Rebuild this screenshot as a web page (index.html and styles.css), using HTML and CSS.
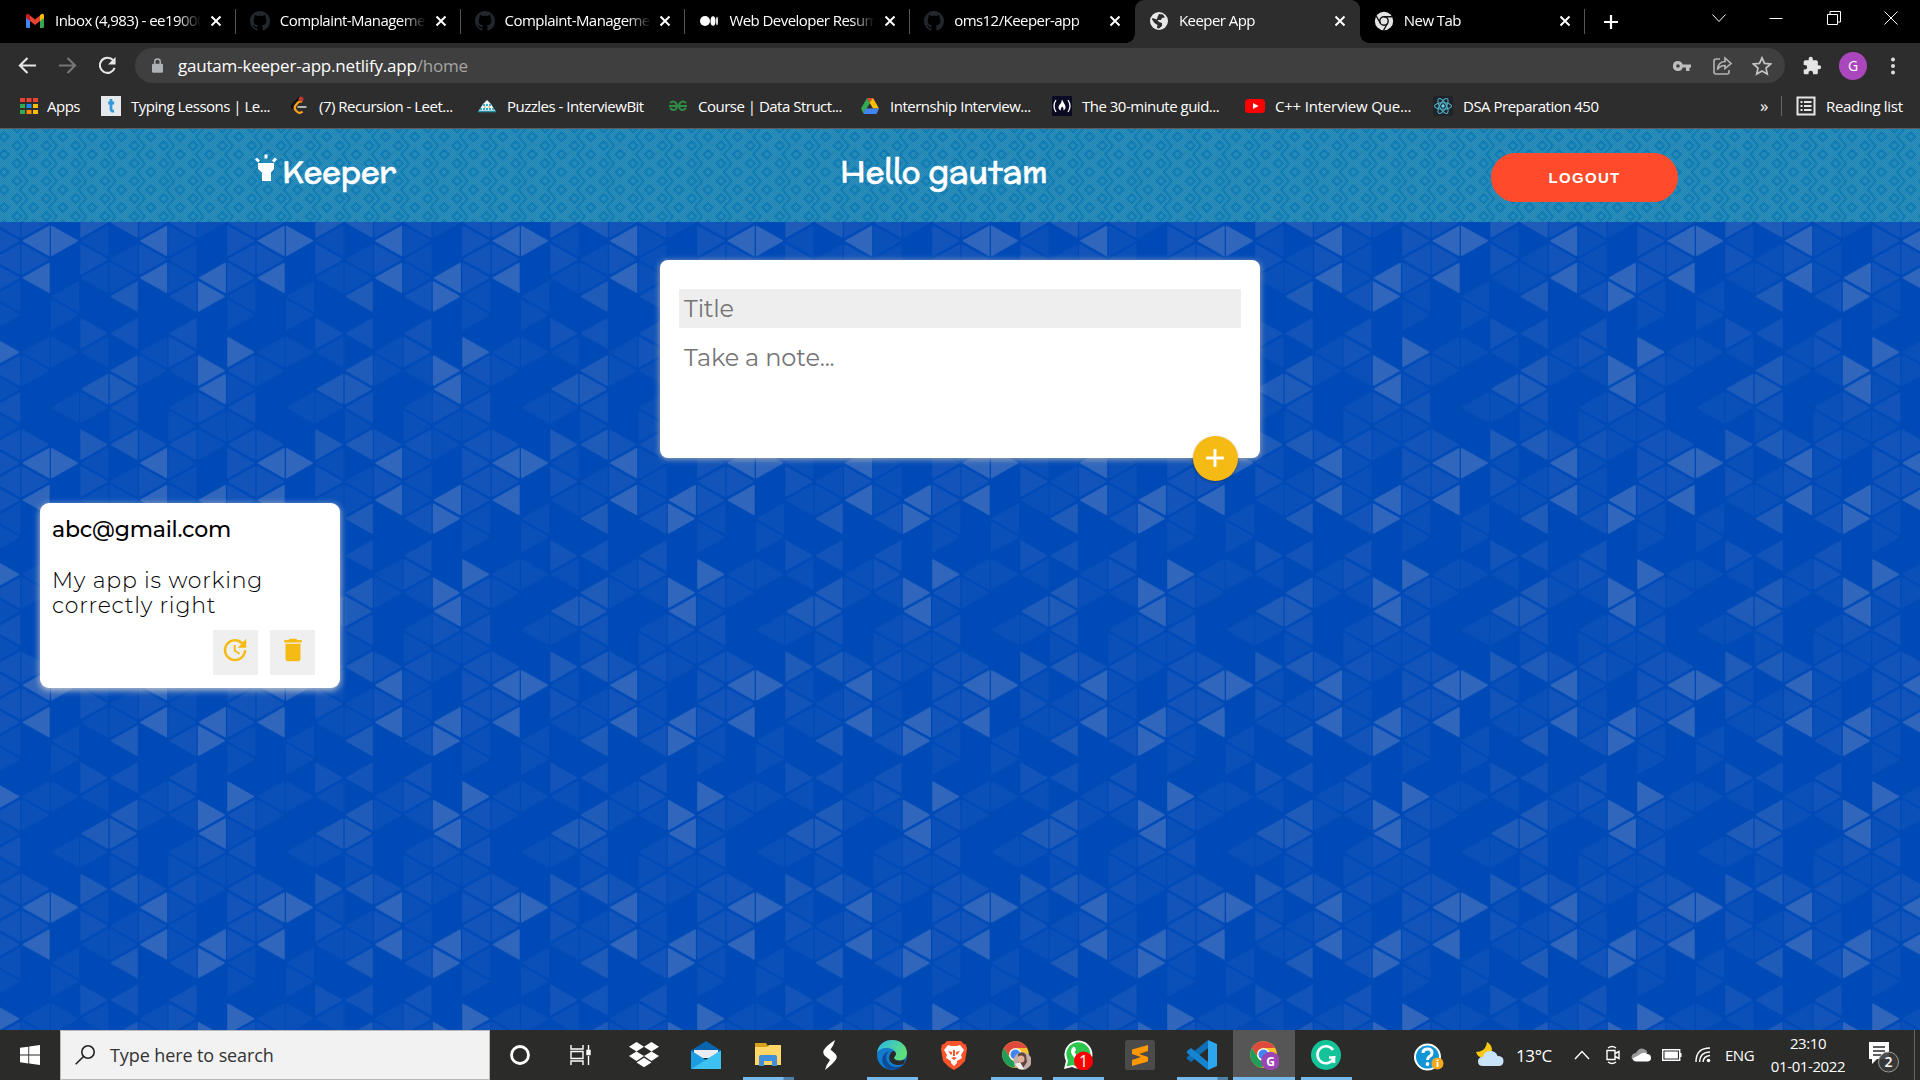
FILE: index.html
```html
<!DOCTYPE html>
<html lang="en">
<head>
<meta charset="utf-8">
<title>Keeper App</title>
<link rel="stylesheet" href="styles.css">
</head>
<body>
<svg class="defs" width="0" height="0" aria-hidden="true">
  <symbol id="x" viewBox="0 0 12 12"><path d="M1.5 1.5l9 9m0-9l-9 9" stroke="#fff" stroke-width="2" fill="none"/></symbol>
  <symbol id="github" viewBox="0 0 16 16"><path fill="#22272e" d="M8 0C3.58 0 0 3.58 0 8c0 3.54 2.29 6.53 5.47 7.59.4.07.55-.17.55-.38 0-.19-.01-.82-.01-1.49-2.01.37-2.53-.49-2.69-.94-.09-.23-.48-.94-.82-1.13-.28-.15-.68-.52-.01-.53.63-.01 1.08.58 1.23.82.72 1.21 1.87.87 2.33.66.07-.52.28-.87.51-1.07-1.78-.2-3.64-.89-3.64-3.95 0-.87.31-1.59.82-2.15-.08-.2-.36-1.02.08-2.12 0 0 .67-.21 2.2.82.64-.18 1.32-.27 2-.27s1.36.09 2 .27c1.53-1.04 2.2-.82 2.2-.82.44 1.1.16 1.92.08 2.12.51.56.82 1.27.82 2.15 0 3.07-1.87 3.75-3.65 3.95.29.25.54.73.54 1.48 0 1.07-.01 1.93-.01 2.2 0 .21.15.46.55.38A8.01 8.01 0 0016 8c0-4.42-3.58-8-8-8z"/></symbol>
  <symbol id="chrome" viewBox="0 0 48 48">
    <circle cx="24" cy="24" r="22" fill="#fbc02d"/>
    <path fill="#de4b3e" d="M4.9 13A22 22 0 0 1 43 13.200H24A11 11 0 0 0 14.500 29.500z"/>
    <path fill="#1e9e5a" d="M4.900 13L14.500 29.500A11 11 0 0 0 24 35L22 46A22 22 0 0 1 4.900 13z"/>
    <circle cx="24" cy="24" r="10.500" fill="#fff"/><circle cx="24" cy="24" r="8.300" fill="#4285f4"/>
  </symbol>
</svg>

<header class="tabs">
  <div class="tab">
    <svg class="fav" viewBox="0 0 20 20"><path fill="#4285f4" d="M1 5v10.500q0 1.500 1.500 1.500H5V8.500z"/><path fill="#34a853" d="M19 5v10.500q0 1.500-1.500 1.500H15V8.500z"/><path fill="#ea4335" d="M5 4.500l5 4 5-4V10l-5 4-5-4z"/><path fill="#c5221f" d="M1 5q0-3 2.500-2L5 4.300V10L1 7z"/><path fill="#fbbc04" d="M19 5q0-3-2.500-2L15 4.300V10l4-3z"/></svg>
    <span class="label">Inbox (4,983) - ee190001</span><svg class="close"><use href="#x"/></svg>
  </div>
  <div class="tab"><svg class="fav"><use href="#github"/></svg><span class="label">Complaint-Management</span><svg class="close"><use href="#x"/></svg></div>
  <div class="tab"><svg class="fav"><use href="#github"/></svg><span class="label">Complaint-Management</span><svg class="close"><use href="#x"/></svg></div>
  <div class="tab"><svg class="fav" viewBox="0 0 20 20" fill="#fff"><circle cx="6" cy="10" r="5"/><ellipse cx="14" cy="10" rx="2.500" ry="4.800"/><ellipse cx="18" cy="10" rx=".9" ry="4.300"/></svg><span class="label">Web Developer Resume</span><svg class="close"><use href="#x"/></svg></div>
  <div class="tab before-active"><svg class="fav"><use href="#github"/></svg><span class="label">oms12/Keeper-app</span><svg class="close"><use href="#x"/></svg></div>
  <div class="tab active"><svg class="fav" viewBox="0 0 20 20"><circle cx="10" cy="10" r="9" fill="#e8e8e8"/><path fill="#2d2d2d" d="M10 3l4 .5 2 3-3 .5-1 2H8.500L10 11l3 1v3l-3 2.500-2-.5.5-3-3-2L3 8.500 3.500 7 8 8.500 8.500 6z"/></svg><span class="label">Keeper App</span><svg class="close"><use href="#x"/></svg></div>
  <div class="tab"><svg class="fav" viewBox="0 0 20 20"><circle cx="10" cy="10" r="9.200" fill="#e4e4e4"/><circle cx="10" cy="10" r="4.200" fill="#e4e4e4" stroke="#111" stroke-width="1.400"/><path d="M10 5.700h8.300M6.300 12L2.200 5M13.700 12l-4 7" stroke="#111" stroke-width="1.400"/></svg><span class="label">New Tab</span><svg class="close"><use href="#x"/></svg></div>
  <svg class="plus" viewBox="0 0 16 16"><path d="M8 1v14M1 8h14" stroke="#fff" stroke-width="2.200"/></svg>
  <div class="window-buttons">
    <svg viewBox="0 0 14 14"><path d="M.5 3.500l6.500 7 6.500-7"/></svg>
    <svg viewBox="0 0 14 14"><path d="M.5 7.500h13"/></svg>
    <svg viewBox="0 0 14 14"><path d="M.5 3.500h10v10H.500zM3 3.500v-3h10.500V11h-3"/></svg>
    <svg viewBox="0 0 14 14"><path d="M.5.5l13 13m0-13l-13 13"/></svg>
  </div>
</header>

<nav class="toolbar">
  <svg class="nav-icon" viewBox="0 0 20 20" stroke="#e6e6e6"><path d="M19 10H2m8-8l-8 8 8 8"/></svg>
  <svg class="nav-icon" viewBox="0 0 20 20" stroke="#777"><path d="M1 10h17m-8-8l8 8-8 8"/></svg>
  <svg class="nav-icon" viewBox="0 0 20 20" stroke="#e6e6e6"><path d="M17.500 12.500A8 8 0 1 1 16 4.500"/><path d="M18.500 1v8h-8z" fill="#e6e6e6" stroke="none"/></svg>
  <div class="omnibox">
    <svg class="lock" viewBox="0 0 12 16"><rect y="6" width="12" height="10" rx="1.500" fill="#aeb1b6"/><path d="M3 7V4a3 3 0 0 1 6 0v3" fill="none" stroke="#aeb1b6" stroke-width="1.600"/></svg>
    <span class="url">gautam-keeper-app.netlify.app<i>/home</i></span>
    <svg class="oi" viewBox="0 0 20 20"><path fill="#bdbdbd" fill-rule="evenodd" d="M6 5a5 5 0 1 0 4.700 6.500H14V15h3.500v-3.500H19v-3h-8.300A5 5 0 0 0 6 5zm0 3.200a1.800 1.800 0 1 1 0 3.600 1.800 1.800 0 0 1 0-3.600z"/></svg>
    <svg class="oi" viewBox="0 0 20 20" fill="none" stroke="#b4b4b4" stroke-width="1.600"><path d="M8 3H4a2 2 0 0 0-2 2v11a2 2 0 0 0 2 2h11a2 2 0 0 0 2-2v-2"/><path d="M13 2l6 5.500-6 5V9.500q-5 0-7.500 4Q6 6 13 5.500z"/></svg>
    <svg class="oi" viewBox="0 0 20 20" fill="none" stroke="#c4c4c4" stroke-width="1.700"><path d="M10 1.800l2.500 5.600 6.100.6-4.600 4.100 1.300 6L10 15l-5.300 3.100 1.300-6L1.400 8l6.100-.6z"/></svg>
  </div>
  <svg class="puzzle" viewBox="0 0 24 24"><path fill="#e4e4e4" d="M20.500 11H19V7c0-1.100-.9-2-2-2h-4V3.500a2.500 2.500 0 0 0-5 0V5H4c-1.100 0-2 .9-2 2v3.800h1.500a2.700 2.700 0 0 1 0 5.400H2V20c0 1.100.9 2 2 2h3.800v-1.500a2.700 2.700 0 0 1 5.400 0V22H17c1.100 0 2-.9 2-2v-4h1.500a2.500 2.500 0 0 0 0-5z"/></svg>
  <span class="avatar">G</span>
  <svg class="dots" viewBox="0 0 4 18" fill="#ddd"><circle cx="2" cy="2.500" r="2"/><circle cx="2" cy="9" r="2"/><circle cx="2" cy="15.500" r="2"/></svg>
</nav>

<nav class="bookmarks">
  <a class="apps-link"><svg viewBox="0 0 20 20"><path fill="#ea4335" d="M1 2h5v4H1zm6.500 0h5v4h-5zM14 2h5v4h-5z"/><path fill="#34a853" d="M1 8h5v4H1zm0 6h5v4H1z"/><path fill="#1e88f0" d="M7.500 8h5v4h-5z"/><path fill="#fbbc04" d="M14 8h5v4h-5zm0 6h5v4h-5z"/><path fill="#fb8c04" d="M7.500 14h5v4h-5z"/></svg>Apps</a>
  <a><svg viewBox="0 0 20 20"><rect width="20" height="20" fill="#e6e9ec"/><path d="M10 3v10q0 2.500 3 2M7.200 7h6" stroke="#3498db" stroke-width="2.800" fill="none"/></svg>Typing Lessons | Le...</a>
  <a><svg viewBox="0 0 20 20"><path d="M11 1L4 8.500q-2 2 0 4" fill="none" stroke="#111" stroke-width="2.300"/><path d="M13 6q-2-1.500-4 .5l-2.500 3q-1.500 2.500 0 4.500l2 2q2.500 2 5-.5" fill="none" stroke="#ffa116" stroke-width="2.200"/><path d="M8.500 11h9" stroke="#b3b3b3" stroke-width="2"/><circle cx="12" cy="3" r="2.500" fill="#b93a32"/></svg>(7) Recursion - Leet...</a>
  <a><svg viewBox="0 0 20 20"><path fill="#e9f5f8" d="M10 4l4 4 5 8H1l5-8z"/><path d="M6 9h8M3 13h14" stroke="#38a9c7" stroke-width="2" stroke-dasharray="2 1"/><path d="M1 15.500h18" stroke="#2b8ca8" stroke-width="1.600"/><path d="M7 11h7" stroke="#f3a53b" stroke-dasharray="2 2"/></svg>Puzzles - InterviewBit</a>
  <a><svg viewBox="0 0 20 20" fill="none" stroke="#2f8d46" stroke-width="2"><path d="M1 10h18M2 7q3-3 6 0 2 3 0 6-3 2.500-6-1M18 7q-3-3-6 0-2 3 0 6 3 2.500 6-1"/></svg>Course | Data Struct...</a>
  <a><svg viewBox="0 0 20 20"><path fill="#ea4335" d="M7 2h6l-3 5z"/><path fill="#34a853" d="M7 2l3 5-6.500 10.500L1 12.500z"/><path fill="#fbbc04" d="M13 2l6 10.500h-6L9.500 6.500z"/><path fill="#4285f4" d="M5.500 12.500H19L16.500 18h-13z"/></svg>Internship Interview...</a>
  <a><svg viewBox="0 0 20 20"><rect width="20" height="20" fill="#0a0a23"/><path d="M4 4q-4 6 0 12M16 4q4 6 0 12" stroke="#fff" stroke-width="1.300" fill="none"/><path fill="#fff" d="M10 3.500q1 2 3 5.500 1.500 4-1.500 5.500.5-3-1.500-4-1.500 1.500-1.300 4Q5.500 13 7 9.500q2.500-2 3-6z"/></svg>The 30-minute guid...</a>
  <a class="wide"><svg viewBox="0 0 20 20"><rect y="3" width="20" height="14" rx="3.500" fill="#f00"/><path d="M8 7l5.500 3L8 13z" fill="#fff"/></svg>C++ Interview Que...</a>
  <a><svg viewBox="0 0 20 20"><rect width="20" height="20" rx="2" fill="#20232a"/><g fill="none" stroke="#4fb3cc" stroke-width="1.100"><ellipse cx="10" cy="10" rx="8.500" ry="3.300"/><ellipse cx="10" cy="10" rx="8.500" ry="3.300" transform="rotate(60 10 10)"/><ellipse cx="10" cy="10" rx="8.500" ry="3.300" transform="rotate(120 10 10)"/></g><circle cx="10" cy="10" r="1.700" fill="#61dafb"/></svg>DSA Preparation 450</a>
  <span class="more">»</span>
  <a class="reading"><svg viewBox="0 0 20 20" stroke="#e6e6e6" fill="none" stroke-width="2"><rect x="1.500" y="1.500" width="17" height="17"/><path d="M8 6h7.500M8 10h7.500M8 14h7.500M4.500 6h2M4.500 10h2M4.500 14h2"/></svg>Reading list</a>
</nav>

<main class="page">
  <div class="site-header">
    <svg class="weave" width="100%" height="100%" aria-hidden="true">
      <defs><pattern id="weave" width="29.333" height="17.667" patternUnits="userSpaceOnUse" x="-1.600" y="3.400">
        <g fill="none" stroke="#0e7cb4" stroke-width="2.200"><path d="M18.600 8.900l4.500 4.400-4.500 4.400-4.500-4.400zM18.600-8.800l4.500 4.400-4.500 4.400-4.500-4.400zM5.700 0l4.500 4.400-4.500 4.400-4.500-4.400zM5.700 17.700l4.500 4.400-4.500 4.400-4.500-4.400z"/><path d="M25.200-.5L21.500 4.400 29 13.300l-3.800 5M-4.200-.5L-7.800 4.400-.4 13.300l-3.800 5"/></g>
      </pattern>
      <pattern id="dither" width="2" height="2" patternUnits="userSpaceOnUse"><rect width="1" height="1" fill="#3590b8"/><rect x="1" y="1" width="1" height="1" fill="#3590b8"/></pattern></defs>
      <rect width="100%" height="100%" fill="url(#dither)"/><rect width="100%" height="100%" fill="url(#weave)"/>
    </svg>
    <h1 class="brand"><svg viewBox="0 0 22 27" fill="#fff"><path d="M3 9h16v6l-3 3.500V27H7v-8.500L3 15z"/><path d="M9.500.5h3v4h-3zM0 5.500l2-2 3 3-2 2zM22 5.500l-2-2-3 3 2 2z"/></svg>Keeper</h1>
    <h1 class="hello">Hello gautam</h1>
    <button class="logout">LOGOUT</button>
  </div>
  <div class="board">
    <svg class="triangles" width="100%" height="100%" aria-hidden="true">
      <defs><pattern id="tri" width="235" height="222.200" patternUnits="userSpaceOnUse" x="109" y="114.600">
        <path class="t1" d="M27 89.500l-25.500-14.300v28.600zM2.500 145l25.500-14.300v28.600zM27 163.500l-25.500-14.300v28.600zM31.900 15.500l25.500-14.300v28.600zM56.400 34l-25.500-14.300v28.600zM85.800 126.500l-25.500-14.300v28.600zM61.300 145l25.500-14.300v28.600zM85.800 163.500l-25.500-14.300v28.600zM61.300 34l25.500-14.300v28.600zM61.300 71l25.500-14.300v28.600zM85.800 89.500l-25.500-14.300v28.600zM90.600 89.500l25.500-14.300v28.600zM115.100 108l-25.500-14.300v28.600zM120 182l25.500-14.300v28.600zM144.500 200.500l-25.500-14.300v28.600zM144.500 52.500l-25.500-14.300v28.600zM144.500 89.500l-25.500-14.300v28.600zM149.400 15.500l25.500-14.300v28.600zM173.900 34l-25.500-14.300v28.600zM178.800 182l25.500-14.300v28.600zM203.300 200.500l-25.500-14.300v28.600zM203.300 15.500l-25.500-14.300v28.600zM178.800 71l25.500-14.300v28.600zM208.100 126.500l25.500-14.300v28.600zM208.100 163.500l25.500-14.300v28.600zM208.100 15.500l25.500-14.300v28.600zM232.600 71l-25.500-14.300v28.600z"/>
        <path class="t2" d="M2.500 71l25.500-14.300v28.600zM2.500 219l25.500-14.300v28.600zM2.500-3.200l25.500-14.300v28.600zM56.400 145l-25.500-14.300v28.600zM56.400 108l-25.500-14.300v28.600zM61.300 182l25.500-14.300v28.600zM61.300 219l25.500-14.300v28.600zM61.300-3.200l25.500-14.300v28.600zM85.800 15.500l-25.500-14.300v28.600zM61.300 108l25.500-14.300v28.600zM115.100 71l-25.500-14.300v28.600zM144.500 126.500l-25.500-14.300v28.600zM120 145l25.500-14.300v28.600zM144.500 163.500l-25.500-14.300v28.600zM120 34l25.500-14.300v28.600zM120 71l25.500-14.300v28.600zM120 108l25.500-14.300v28.600zM173.900 108l-25.500-14.300v28.600zM173.900 145l-25.500-14.300v28.600zM232.600 145l-25.500-14.300v28.600zM232.600 219l-25.500-14.300v28.600zM232.600-3.200l-25.500-14.300v28.600z"/>
        <path class="t3" d="M2.500 34l25.500-14.300v28.600zM27 52.500l-25.500-14.300v28.600zM2.500 108l25.500-14.300v28.600zM2.500 182l25.500-14.300v28.600zM232.600 108l-25.500-14.300v28.600zM208.100 52.500l25.500-14.300v28.600z"/>
        <path class="t4" d="M31.900 126.500l25.500-14.300v28.600zM31.900 163.500l25.500-14.300v28.600zM90.600 163.500l25.500-14.300v28.600zM115.100 182l-25.500-14.300v28.600zM115.100 34l-25.500-14.300v28.600zM90.600 52.500l25.500-14.300v28.600zM144.500 15.500l-25.500-14.300v28.600zM149.400 126.500l25.500-14.300v28.600zM149.400 163.500l25.500-14.300v28.600zM203.300 126.500l-25.500-14.300v28.600z"/>
      </pattern></defs>
      <rect width="100%" height="100%" fill="url(#tri)"/>
    </svg>
    <form class="create">
      <div class="field title">Title</div>
      <div class="field body">Take a note...</div>
      <span class="add"><svg viewBox="0 0 24 24"><path fill="#fff" stroke="#fff" stroke-width=".3" d="M19 13h-6v6h-2v-6H5v-2h6V5h2v6h6v2z"/></svg></span>
    </form>
    <article class="note">
      <h2>abc@gmail.com</h2>
      <p>My app is working<br>correctly right</p>
      <div class="actions">
        <span><svg viewBox="0 0 24 24"><path d="M21 10.120h-6.780l2.740-2.820c-2.730-2.700-7.150-2.800-9.880-.1-2.730 2.710-2.730 7.080 0 9.790s7.150 2.710 9.880 0C18.320 15.650 19 14.080 19 12.100h2c0 1.980-.88 4.550-2.640 6.290-3.510 3.480-9.210 3.480-12.720 0-3.500-3.470-3.530-9.110-.02-12.580s9.140-3.470 12.650 0L21 3v7.120zM12.500 8v4.250l3.500 2.080-.72 1.210L11 13V8h1.500z"/></svg></span>
        <span><svg viewBox="0 0 24 24"><path d="M6 19c0 1.100.9 2 2 2h8c1.100 0 2-.9 2-2V7H6v12zM19 4h-3.500l-1-1h-5l-1 1H5v2h14V4z"/></svg></span>
      </div>
    </article>
  </div>
</main>

<footer class="taskbar">
  <div class="start"><svg viewBox="0 0 20 20" fill="#fff"><path d="M0 2.800l8.300-1.100v7.900H0zM9.200 1.600L20 0v9.600H9.200zM0 10.500h8.300v7.900L0 17.200zM9.200 10.500H20V20L9.200 18.500z"/></svg></div>
  <div class="search"><svg viewBox="0 0 20 20" fill="none" stroke="#222" stroke-width="1.600"><circle cx="13" cy="7" r="6.200"/><path d="M8.500 11.500L.7 19.300"/></svg>Type here to search</div>
  <div class="apps">
    <span><svg viewBox="0 0 30 30"><circle cx="15" cy="15" r="8.500" fill="none" stroke="#fff" stroke-width="2.800"/></svg></span>
    <span><svg viewBox="0 0 30 30" fill="none" stroke="#fff" stroke-width="1.400"><path d="M4 5v4h12V5M4 25v-4h12v4M4 11.500h12v7H4zM21.500 5v5m0 6v9"/><path d="M20 10.500h3v4h-3z" fill="#fff"/></svg></span>
    <span><svg viewBox="0 0 30 30" fill="#fff"><path d="M7.500 2L15 6.700l-7.500 4.700L0 6.700zM22.500 2L30 6.700l-7.500 4.700L15 6.700zM7.500 11.400l7.500 4.700-7.500 4.800L0 16.100zM22.500 11.400l7.500 4.700-7.500 4.800-7.500-4.800zM15 17.700l7.500 4.800-7.500 4.800-7.500-4.800z"/></svg></span>
    <span><svg viewBox="0 0 30 30"><path fill="#0a64ad" d="M0 10.500L15 1l15 9.500V18H0z"/><path fill="#e8edf3" d="M3 10h24v8H3z"/><path fill="#1b9de2" d="M0 10.500L15 20l15-9.500V29H0z"/><path fill="#3cc1f2" d="M0 29L30 10.500V29z"/></svg></span>
    <span class="run two"><svg viewBox="0 0 30 30"><path fill="#d9a01b" d="M2 3h11l2 3v4H2z"/><path fill="#ffd766" d="M2 7h12l2-2h12v20H2z"/><path fill="#3f8fdc" d="M6 26v-9q0-2 2-2h14q2 0 2 2v9h-5v-5h-8v5z"/></svg></span>
    <span><svg viewBox="0 0 30 30" fill="#fff"><path d="M20 0q-9 6-11.500 10.500-1 3 1 5L15 20q-4 5-5 10 9-7 11.500-11.500 1-2.500-1-4.500L15.500 9.500Q19 5 20 0z"/></svg></span>
    <span class="run"><svg viewBox="0 0 30 30"><defs><linearGradient id="eg" x2="1" y2=".5"><stop stop-color="#2ab5ee"/><stop offset="1" stop-color="#60e078"/></linearGradient></defs><circle cx="15" cy="15" r="15" fill="#127bcb"/><path fill="url(#eg)" d="M0 13C1 4 8 0 15 0c9 0 15 6 15 13 0 5-4 7.500-8 7.500-3 0-5-1-5-2.500 0-1 1.500-1.500 1.500-4C18.500 10 14 8 10 8 5 8 1 10 0 13z"/><path fill="#0b4c99" d="M12 11c-3 3-4 8-1 12 4 5 11 5 16 1.500-8 8-18 6-21-1-2-6 1-11 6-12.500z"/><path fill="#2a2a2a" d="M19 14c-.5 3-3 3-1.500 5 2 2 7 2.500 11 0l-2 5c-5 2-12 1-14-4-1-4 1-9 5-9q1.500 1.500 1.500 3z"/></svg></span>
    <span><svg viewBox="0 0 30 30"><path fill="#fb542b" d="M8 1h14l3 3 2 .5L28 9l-2 12-6 6-5 3-5-3-6-6L2 9l1-4.500L5 4z"/><path fill="#fff" d="M9 5l3 1h6l3-1 4 5-3 5 1 3-5 3v2l-3 3-3-3v-2l-5-3 1-3-3-5z"/><path fill="#fb542b" d="M9 11l4 1v2l-1 1zM21 11l-4 1v2l1 1zM12 18l3-1 3 1-3 2zM14 10h2v6h-2z"/></svg></span>
    <span class="run"><svg viewBox="0 0 30 30"><use href="#chrome" width="29" height="29"/><circle cx="21.500" cy="21" r="9" fill="#c3aea5"/><path d="M17 14q5-4 8 1l1 7-4 6-5-2z" fill="#614541"/><circle cx="20" cy="19" r="3.500" fill="#e0b198"/><path d="M14 24l5-2 4 7h-5z" fill="#eee"/></svg></span>
    <span class="run"><svg viewBox="0 0 30 30"><path fill="#fff" d="M1 29l2-8A14 14 0 1 1 9 27z"/><path fill="#2cc64f" d="M3.500 26.500l1.600-6A12 12 0 1 1 10 25z"/><path fill="#fff" d="M10 7q2-1 3 3l-1.500 2q2 4 5.500 5.500l2-2q4 1 3.500 3-2 4-7 2Q9 17 8 12q-.5-3 2-5z"/><circle cx="20.500" cy="21" r="9.500" fill="#f00"/><text x="20.500" y="26.500" class="badge">1</text></svg></span>
    <span><svg viewBox="0 0 30 30"><rect width="30" height="30" rx="2.500" fill="#4b4b4b"/><path fill="#ff9800" d="M7 9.500L23 5v6l-9 3 9 3v4.500L7 26v-6l9-3-9-3z"/></svg></span>
    <span class="run two"><svg viewBox="0 0 30 30"><path fill="#0f6fb5" d="M21 0v8L4 22l-4-3 0-2z"/><path fill="#1484d1" d="M21 30v-8L4 8l-4 3v2z"/><path fill="#2da6ee" d="M21 0l9 4v22l-9 4z"/></svg></span>
    <span class="run current"><svg viewBox="0 0 30 30"><use href="#chrome" width="29" height="29"/><circle cx="21.500" cy="21" r="9.300" fill="#9d44b5"/><text x="21.500" y="25.500" class="badge small">G</text></svg></span>
    <span class="run"><svg viewBox="0 0 30 30"><circle cx="15" cy="15" r="15" fill="#15c39a"/><path d="M22 10A8.500 8.500 0 1 0 23 17.500h-5M23 16v7" fill="none" stroke="#fff" stroke-width="2.600"/></svg></span>
  </div>
  <svg class="help" viewBox="0 0 30 28"><circle cx="13.500" cy="14" r="12.500" fill="#1296d8" stroke="#fff" stroke-width="2"/><path d="M9 10q0-4 4.500-4t4.500 4q0 2-2.500 3.500Q13.500 15 13.500 17" fill="none" stroke="#fff" stroke-width="3"/><circle cx="13.500" cy="21" r="1.900" fill="#fff"/><circle cx="23.500" cy="20.500" r="6" fill="#f3a81f"/><path d="M23.500 19v5M23.500 16.500v1.500" stroke="#fff" stroke-width="1.800"/></svg>
  <svg class="weather" viewBox="0 0 28 26"><path fill="#fbc813" d="M11 0q-1 6-4 8t-7 2q2 6 8 6 8-1 8-9Q15 2 11 0z"/><path fill="#c9e4f9" d="M7 24q-5 0-5-4.500T7 15q1-6 7-6t7.500 5q6 0 6 5t-5 5z"/></svg>
  <span class="temp">13°C</span>
  <svg class="t-chevron" viewBox="0 0 16 10"><path d="M1 9l7-7.500L15 9"/></svg>
  <svg class="t-cam" viewBox="0 0 16 20"><path d="M2 5.500h8v9H2zM10 8.500l4-2v7l-4-2M3 3q4-3 8 0M3 17q4 3 8 0"/></svg>
  <svg class="t-cloud" viewBox="0 0 20 14"><path fill="#999" d="M2 12q-3-3 0-6 2-1 3-1 3-6 8-4 3 1 3.500 4L6 13z"/><path fill="#fff" d="M5 13.500q-3-.5-3.500-3L8 7q5-4 8-1 4 0 4 4 0 3-3 3.500z"/></svg>
  <svg class="t-batt" viewBox="0 0 20 12"><path d="M.7.7h17v10.600h-17z"/><path d="M2.500 2.500h13.400v7H2.500zM18 4h1.500v4H18z" fill="#fff" stroke="none"/></svg>
  <svg class="t-wifi" viewBox="0 0 16 16"><path d="M1 15Q1 1 15 1M4.500 15Q5 5 15 5M8 15Q8.500 9 15 8.500"/><circle cx="13.500" cy="13.500" r="1.800" fill="#fff" stroke="none"/></svg>
  <span class="lang">ENG</span>
  <div class="clock"><span>23:10</span><span>01-01-2022</span></div>
  <svg class="notif" viewBox="0 0 32 32"><path fill="#fff" d="M1 1h20v17H9l-5 5v-5H1z"/><path d="M5 6h12M5 10h12M5 14h8" stroke="#2b2b2b" stroke-width="1.400"/><circle cx="20.500" cy="21" r="10" fill="#3a3a3a" fill-opacity=".9" stroke="#999"/><text x="20.500" y="26" class="badge two">2</text></svg>
  <span class="peek"></span>
</footer>
</body>
</html>
```
FILE: styles.css
```css
* { box-sizing: border-box; }
body {
  margin: 0;
  width: 1920px;
  height: 1080px;
  overflow: hidden;
  display: flex;
  flex-direction: column;
  font-family: "Segoe UI", "Open Sans", "Noto Sans", sans-serif;
  color: #fff;
  background: #000;
}
svg { display: block; flex: none; }
.defs { position: absolute; }

/* tab strip */
.tabs { display: flex; align-items: center; height: 43px; padding-left: 11px; background: #000; flex: none; }
.tab { display: flex; align-items: center; width: 224.8px; height: 43px; padding: 0 14px 1px 14px; position: relative; font-size: 15px; letter-spacing: -0.55px; flex: none; }
.tab::after { content: ""; position: absolute; right: 0; top: 9px; width: 1px; height: 25px; background: #555; }
.tab.active::after, .tab.before-active::after { display: none; }
.tab.active { background: #2d2d2d; border-radius: 9px 9px 0 0; }
.tab.active::before { content: ""; position: absolute; left: -9px; right: -9px; bottom: 0; height: 9px; background: radial-gradient(circle at 0 0, transparent 8.5px, #2d2d2d 9px) left / 9px 9px no-repeat, radial-gradient(circle at 100% 0, transparent 8.5px, #2d2d2d 9px) right / 9px 9px no-repeat; }
.fav { width: 20px; height: 20px; margin-right: 10px; }
.label { width: 146px; padding-bottom: 2px; overflow: hidden; white-space: nowrap; -webkit-mask-image: linear-gradient(90deg, #000 122px, transparent 146px); mask-image: linear-gradient(90deg, #000 122px, transparent 146px); }
.close { width: 12px; height: 12px; margin-left: 9px; }
.plus { width: 16px; height: 16px; margin-left: 18px; }
.window-buttons { display: flex; gap: 43.500px; margin-left: 93px; height: 36px; align-items: center; align-self: flex-start; }
.window-buttons svg { width: 14px; height: 14px; fill: none; stroke: #fff; stroke-width: 1; }

/* address bar */
.toolbar { display: flex; align-items: center; height: 45px; padding-left: 18px; background: #2d2d2d; flex: none; }
.nav-icon { width: 19px; height: 19px; margin-right: 21px; fill: none; stroke-width: 2.2; }
.omnibox { display: flex; align-items: center; width: 1650px; height: 35px; padding: 0 13px 0 17px; margin-left: -3px; border-radius: 18px; background: #3f3f3f; }
.lock { width: 11px; height: 15px; margin-right: 15px; }
.url { flex: 1; font-size: 17px; letter-spacing: -0.2px; }
.url i { font-style: normal; color: #a5a5a5; }
.oi { width: 20px; height: 20px; margin-left: 20px; }
.puzzle { width: 20px; height: 20px; margin-left: 17px; }
.avatar { width: 28px; height: 28px; margin-left: 17px; border-radius: 50%; background: #ab47bc; font-size: 14px; line-height: 28px; text-align: center; }
.dots { width: 4px; height: 18px; margin-left: 24px; }

/* bookmarks */
.bookmarks {
  display: grid;
  grid-template-columns: 82px 188px 188px 191px 192px 192px 193px 188px 329px 19px 1fr;
  align-items: center;
  height: 41px;
  padding: 0 0 5px 19px;
  background: #2d2d2d;
  border-bottom: 1px solid #5d5a5a;
  flex: none;
}
.bookmarks a { display: flex; align-items: center; gap: 10px; font-size: 15px; letter-spacing: -0.5px; white-space: nowrap; }
.bookmarks .apps-link { gap: 8px; }
.bookmarks .wide { letter-spacing: -0.2px; }
.bookmarks svg { width: 20px; height: 20px; }
.more { font-size: 17px; line-height: 20px; margin-left: -2px; }
.bookmarks .reading { border-left: 1px solid #666; padding-left: 14px; letter-spacing: -0.3px; }

/* Keeper page */
.page { height: 901px; display: flex; flex-direction: column; flex: none; }
.site-header { position: relative; height: 93px; background: #1b84b7; flex: none; display: grid; grid-template-columns: 585px 651px 187px; padding-left: 255px; align-items: start; }
.weave, .triangles { position: absolute; inset: 0; }
.site-header h1 { position: relative; margin: 21px 0 0; font: 400 31.2px/44px McLaren, "Comic Neue", Lato, sans-serif; display: flex; white-space: nowrap; -webkit-text-stroke: 0.5px #fff; }
.brand svg { width: 22px; height: 27px; margin: 4px 5px 0 0; }
.logout { position: relative; width: 187px; height: 49px; margin: 24px 0 0; border: 0; border-radius: 25px; background: #ff4b2b; color: #fff; font: 700 15px "Liberation Sans", Arial, sans-serif; letter-spacing: 1.3px; }

.board { position: relative; flex: 1; background: #004ab8; padding-top: 38px; overflow: hidden; }
.t1, .t2, .t3, .t4 { stroke-width: 1.5; stroke-linejoin: round; }
.t1 { fill: #0b50b8; stroke: #0b50b8; }
.t2 { fill: #1254b9; stroke: #1254b9; }
.t3 { fill: #1f5cba; stroke: #1f5cba; }
.t4 { fill: #3067bd; stroke: #3067bd; }
.create { position: relative; width: 600px; height: 198px; margin: 0 auto; padding: 29px 19px 0; background: #fff; border-radius: 8px; box-shadow: 0 1px 6px #a9adb5; }
.field { height: 39px; padding-left: 5px; font: 400 24px/39px Montserrat, Inter, sans-serif; letter-spacing: -0.15px; color: #757575; }
.field.title { background: #eee; }
.field.body { margin-top: 10px; }
.add { position: absolute; right: 22px; bottom: -23px; width: 45px; height: 45px; border-radius: 50%; background: #f5ba13; box-shadow: 0 1px 3px rgba(0,0,0,.3); display: grid; place-items: center; }
.add svg { width: 30px; height: 30px; margin: 0 1px 1px 0; }
.note { position: relative; width: 300px; height: 185px; margin: 45px 0 0 40px; padding: 14px 12px 0; background: #fff; border-radius: 9px; box-shadow: 0 2px 7px #ccc; color: #000; }
.note h2 { margin: 0; font: 500 22px/26px Montserrat, Inter, sans-serif; letter-spacing: -0.2px; }
.note p { margin: 25px 0 0; font: 300 22px/25px Montserrat, Inter, sans-serif; letter-spacing: 0.8px; white-space: nowrap; }
.actions { display: flex; gap: 12px; margin: 12px 13px 0 0; justify-content: flex-end; }
.actions span { width: 45px; height: 45px; padding: 5px 7.500px; background: #efefef; }
.actions span:first-child { padding-left: 7px; }
.actions svg { width: 30px; height: 30px; fill: #f5ba13; }

/* taskbar */
.taskbar { position: relative; display: flex; align-items: center; height: 50px; background: #2b2b2a; flex: none; }
.start { width: 60px; padding-left: 20px; }
.start svg { width: 20px; height: 20px; }
.search { display: flex; align-items: center; gap: 15px; width: 430px; height: 50px; padding-left: 14px; background: #f2f2f2; border: 1px solid #b9b9b9; color: #333; font-size: 18px; letter-spacing: -0.1px; }
.search svg { width: 20px; height: 20px; }
.apps { display: grid; grid-template-columns: 60px 63px repeat(12, 62px); height: 50px; }
.apps span { position: relative; display: grid; place-items: center; }
.apps svg { width: 30px; height: 30px; }
.run::after { content: ""; position: absolute; left: 6px; right: 5px; bottom: 0; height: 3px; background: #76b9ed; }
.run.two::after { background: linear-gradient(90deg, #76b9ed 40px, #4f7ea6 41px); }
.run.current { background: #565656; }
.run.current::after { left: 0; right: 0; }
.badge { fill: #fff; font: 16px "Open Sans", sans-serif; text-anchor: middle; }
.badge.small { font-size: 12px; font-weight: 700; }
.badge.two { font-size: 14px; font-weight: 600; }
.help { width: 30px; height: 28px; margin-left: 57px; margin-top: 3px; }
.weather { width: 28px; height: 26px; margin-left: 32px; }
.temp { width: 58px; padding-left: 12px; font-size: 17px; letter-spacing: -0.4px; white-space: nowrap; }
.t-chevron, .t-cam, .t-batt, .t-wifi { fill: none; stroke: #fff; stroke-width: 1.4; }
.t-chevron { width: 16px; height: 10px; margin-left: 12px; }
.t-cam { width: 16px; height: 20px; margin-left: 15px; }
.t-cloud { width: 20px; height: 14px; margin-left: 10px; }
.t-batt { width: 20px; height: 12px; margin-left: 11px; }
.t-wifi { width: 16px; height: 16px; margin-left: 13px; }
.lang { margin-left: 14px; width: 30px; font-size: 15px; letter-spacing: -0.5px; }
.clock { display: flex; flex-direction: column; align-items: center; width: 84px; margin-left: 11px; font-size: 15px; line-height: 23px; letter-spacing: -0.4px; white-space: nowrap; }
.notif { width: 32px; height: 32px; margin-left: 18px; margin-top: 3px; }
.peek { width: 1px; height: 50px; background: #666; position: absolute; left: 1914px; top: 0; }
```
